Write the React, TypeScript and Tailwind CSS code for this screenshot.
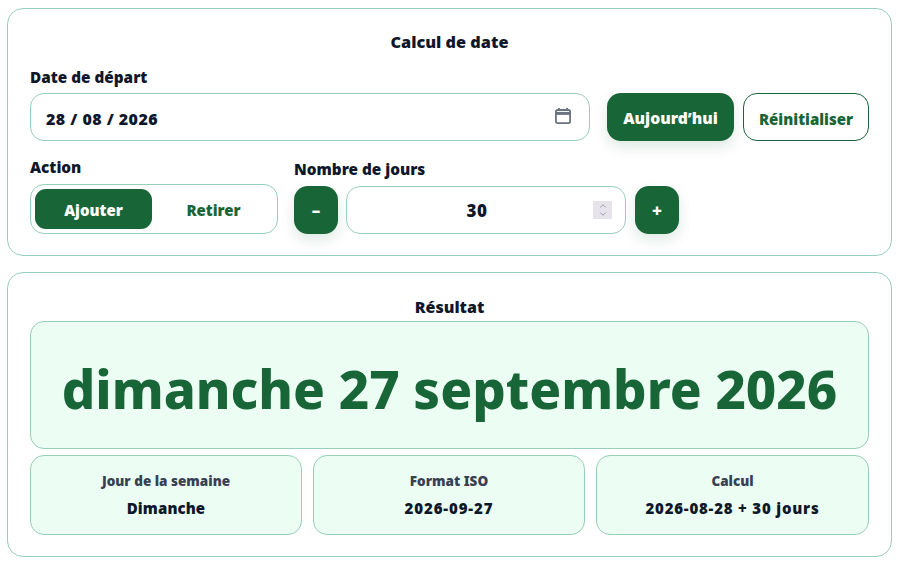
import { ChevronUp, ChevronDown } from "lucide-react";

const stat = (label: string, value: string, extra: string, track: string) => (
  <div key={label} className={`h-[80px] rounded-[14px] border border-[#98cfb8] bg-[#ecfdf3] flex flex-col items-center pt-[15px] ${extra}`}>
    <div className="text-[13.5px] leading-[20px] font-black text-[#374151]">{label}</div>
    <div className={`mt-[7px] text-[15px] leading-[20px] font-black text-[#0f172a] ${track}`}>{value}</div>
  </div>
);

export default function App() {
  return (
    <div className="min-h-[567px] bg-white pl-[7px] pr-[5px] pt-[8px] flex flex-col gap-[16px] text-[#0f172a] font-['Noto_Sans',sans-serif]">
      <section className="h-[248px] rounded-[16px] border border-[#98cfb8] px-[22px] pt-[22px]">
        <h2 className="text-center text-[16.3px] leading-[22px] font-black">Calcul de date</h2>
        <div className="mt-[14px] text-[15.3px] leading-[20px] font-black">Date de départ</div>
        <div className="mt-[6px] flex items-center">
          <div className="w-[560px] h-[48px] rounded-[14px] border border-[#98cfb8] flex items-center justify-between pl-[15px] pr-[17px]">
            <span className="pt-[3px] text-[16px] font-black tracking-[0.45px]">28 / 08 / 2026</span>
            <svg width="18" height="18" viewBox="0 0 18 18" fill="none" stroke="#6b7280" strokeWidth="1.8" className="-mt-[3px]">
              <rect x="1.9" y="3" width="14.2" height="13.2" rx="1.6" />
              <path d="M2 6.4h14" strokeWidth="3" />
              <path d="M5 1v3M13 1v3" />
            </svg>
          </div>
          <button className="ml-[17px] w-[127px] h-[48px] pt-[4px] rounded-[14px] bg-[#186637] text-white text-[15.7px] font-black shadow-[0_6px_14px_rgba(24,102,55,0.14)]">Aujourd’hui</button>
          <button className="ml-[9px] w-[126px] h-[48px] pt-[4px] rounded-[14px] border border-[#186637] text-[#186637] text-[15px] font-black">Réinitialiser</button>
        </div>
        <div className="mt-[16px] flex">
          <div className="w-[248px]">
            <div className="text-[15.3px] leading-[20px] font-black">Action</div>
            <div className="mt-[7px] h-[50px] rounded-[14px] border border-[#98cfb8] p-[4px] flex">
              <button className="w-[117px] pt-[2px] rounded-[11px] bg-[#186637] text-white text-[15px] font-black">Ajouter</button>
              <button className="flex-1 pt-[2px] pl-[2px] text-[#186637] text-[15px] font-black">Retirer</button>
            </div>
          </div>
          <div className="ml-[16px] pt-[2px]">
            <div className="text-[15.3px] leading-[20px] font-black">Nombre de jours</div>
            <div className="mt-[7px] flex items-center">
              <button className="w-[44px] h-[48px] pt-[2px] rounded-[14px] bg-[#186637] text-white text-[17px] font-black shadow-[0_6px_14px_rgba(24,102,55,0.14)]">–</button>
              <div className="relative ml-[8px] w-[280px] h-[48px] pt-[2px] rounded-[14px] border border-[#98cfb8] flex items-center justify-center pr-[18px] text-[17px] font-black tracking-[0.5px]">
                30
                <div className="absolute left-[246px] top-[14px] w-[19px] h-[18px] bg-[#e6e4ea] flex flex-col items-center justify-center text-[#8f8d98]">
                  <ChevronUp size={12} strokeWidth={2} className="-mb-[1px]" />
                  <ChevronDown size={12} strokeWidth={2} className="-mt-[1px]" />
                </div>
              </div>
              <button className="ml-[9px] w-[44px] h-[48px] pt-[2px] rounded-[14px] bg-[#186637] text-white text-[17px] font-black shadow-[0_6px_14px_rgba(24,102,55,0.14)]">+</button>
            </div>
          </div>
        </div>
      </section>
      <section className="h-[285px] rounded-[16px] border border-[#98cfb8] px-[22px] pt-[23px]">
        <h2 className="text-center text-[16px] leading-[22px] font-black">Résultat</h2>
        <div className="mt-[3px] h-[128px] pt-[7px] rounded-[14px] border border-[#98cfb8] bg-[#ecfdf3] flex items-center justify-center text-[52.7px] font-extrabold text-[#186637]">
          dimanche 27 septembre 2026
        </div>
        <div className="mt-[6px] flex gap-[11px]">
          {stat("Jour de la semaine", "Dimanche", "w-[272px]", "tracking-[0.1px]")}
          {stat("Format ISO", "2026-09-27", "w-[272px]", "tracking-[0.9px]")}
          {stat("Calcul", "2026-08-28 + 30 jours", "flex-1", "tracking-[0.8px]")}
        </div>
      </section>
    </div>
  );
}
